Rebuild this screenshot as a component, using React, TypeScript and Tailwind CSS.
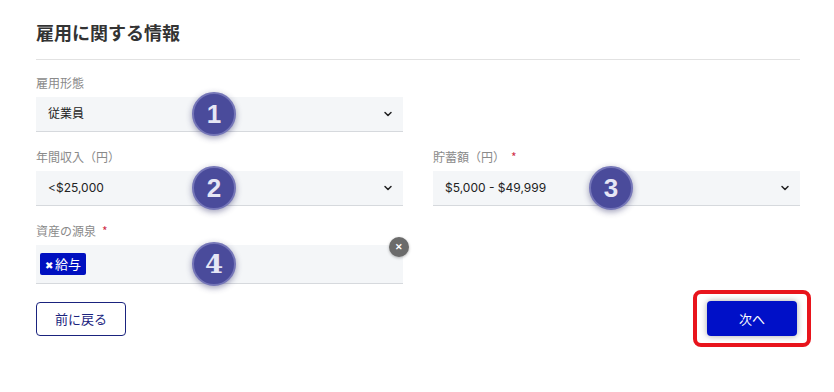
import { ChevronDown } from 'lucide-react';

const font = { fontFamily: '"Noto Sans CJK JP", "Noto Sans", sans-serif' };

function Badge({ n, serif }: { n: string; serif?: boolean }) {
  return (
    <div className="pointer-events-none absolute left-[156px] top-1/2 -translate-y-1/2 w-[44px] h-[44px] rounded-full bg-[#4a4b9b] border-2 border-[#7576b8] shadow-[0_2px_6px_rgba(40,40,100,0.45)] flex items-center justify-center">
      <span
        className="text-[26px] font-bold leading-none text-[#e6e6f5]"
        style={serif ? { fontFamily: '"DejaVu Serif", serif' } : { fontFamily: '"Liberation Sans", sans-serif' }}
      >
        {n}
      </span>
    </div>
  );
}

function Label({ text, required }: { text: string; required?: boolean }) {
  return (
    <div className="text-[12px] leading-[16px] text-[#8a8a8a] mb-[6px]">
      {text}
      {required && <span className="ml-[6px] text-[#d0304a]">*</span>}
    </div>
  );
}

function Select({ value, badge }: { value: string; badge: string }) {
  return (
    <div className="relative h-[35px] bg-[#f4f6f8] border-b border-[#d6d9dd] flex items-center justify-between pl-[12px] pr-[9px]">
      <span className="text-[12px] text-[#222]" style={{ fontFamily: '"Inter", "Noto Sans CJK JP", sans-serif' }}>{value}</span>
      <ChevronDown className="w-[12px] h-[12px] text-[#222]" strokeWidth={3} />
      <Badge n={badge} />
    </div>
  );
}

export default function App() {
  return (
    <div className="w-[834px] h-[392px] bg-white" style={font}>
      <div className="w-[764px] ml-[36px] pt-[20px]">
        <h2 className="text-[18px] leading-[24px] font-bold text-[#333]">雇用に関する情報</h2>
        <div className="mt-[15px] border-t border-[#e2e2e2]" />

        <div className="grid grid-cols-2 gap-x-[30px] gap-y-[17px] mt-[15px]">
          <div>
            <Label text="雇用形態" />
            <Select value="従業員" badge="1" />
          </div>
          <div />
          <div>
            <Label text="年間収入（円）" />
            <Select value="<$25,000" badge="2" />
          </div>
          <div>
            <Label text="貯蓄額（円）" required />
            <Select value="$5,000 - $49,999" badge="3" />
          </div>
          <div>
            <Label text="資産の源泉" required />
            <div className="relative h-[39px] bg-[#f4f6f8] border-b border-[#d6d9dd] flex items-center pl-[4px]">
              <span className="h-[22px] px-[5px] rounded-[2px] bg-[#0010c0] text-white text-[13px] flex items-center gap-[2px]">
                <span className="text-[10px]">✖</span>給与
              </span>
              <span className="absolute -right-[6px] -top-[8px] w-[20px] h-[20px] rounded-full bg-[#6b6b6b] text-white text-[9px] font-bold flex items-center justify-center shadow-[0_1px_3px_rgba(0,0,0,0.3)]">
                ✕
              </span>
              <Badge n="4" serif />
            </div>
          </div>
        </div>

        <div className="flex items-center justify-between mt-[6px]">
          <button className="w-[90px] h-[34px] border border-[#1a237e] rounded-[4px] text-[13px] text-[#1a237e] bg-white">
            前に戻る
          </button>
          <div className="-mr-[11px] border-4 border-[#e8141c] rounded-[8px] px-[10px] py-[7px]">
            <button className="w-[90px] h-[35px] rounded-[4px] bg-[#0010c8] text-white text-[13px] shadow-[0_0_6px_rgba(0,0,0,0.35)]">
              次へ
            </button>
          </div>
        </div>
      </div>
    </div>
  );
}
